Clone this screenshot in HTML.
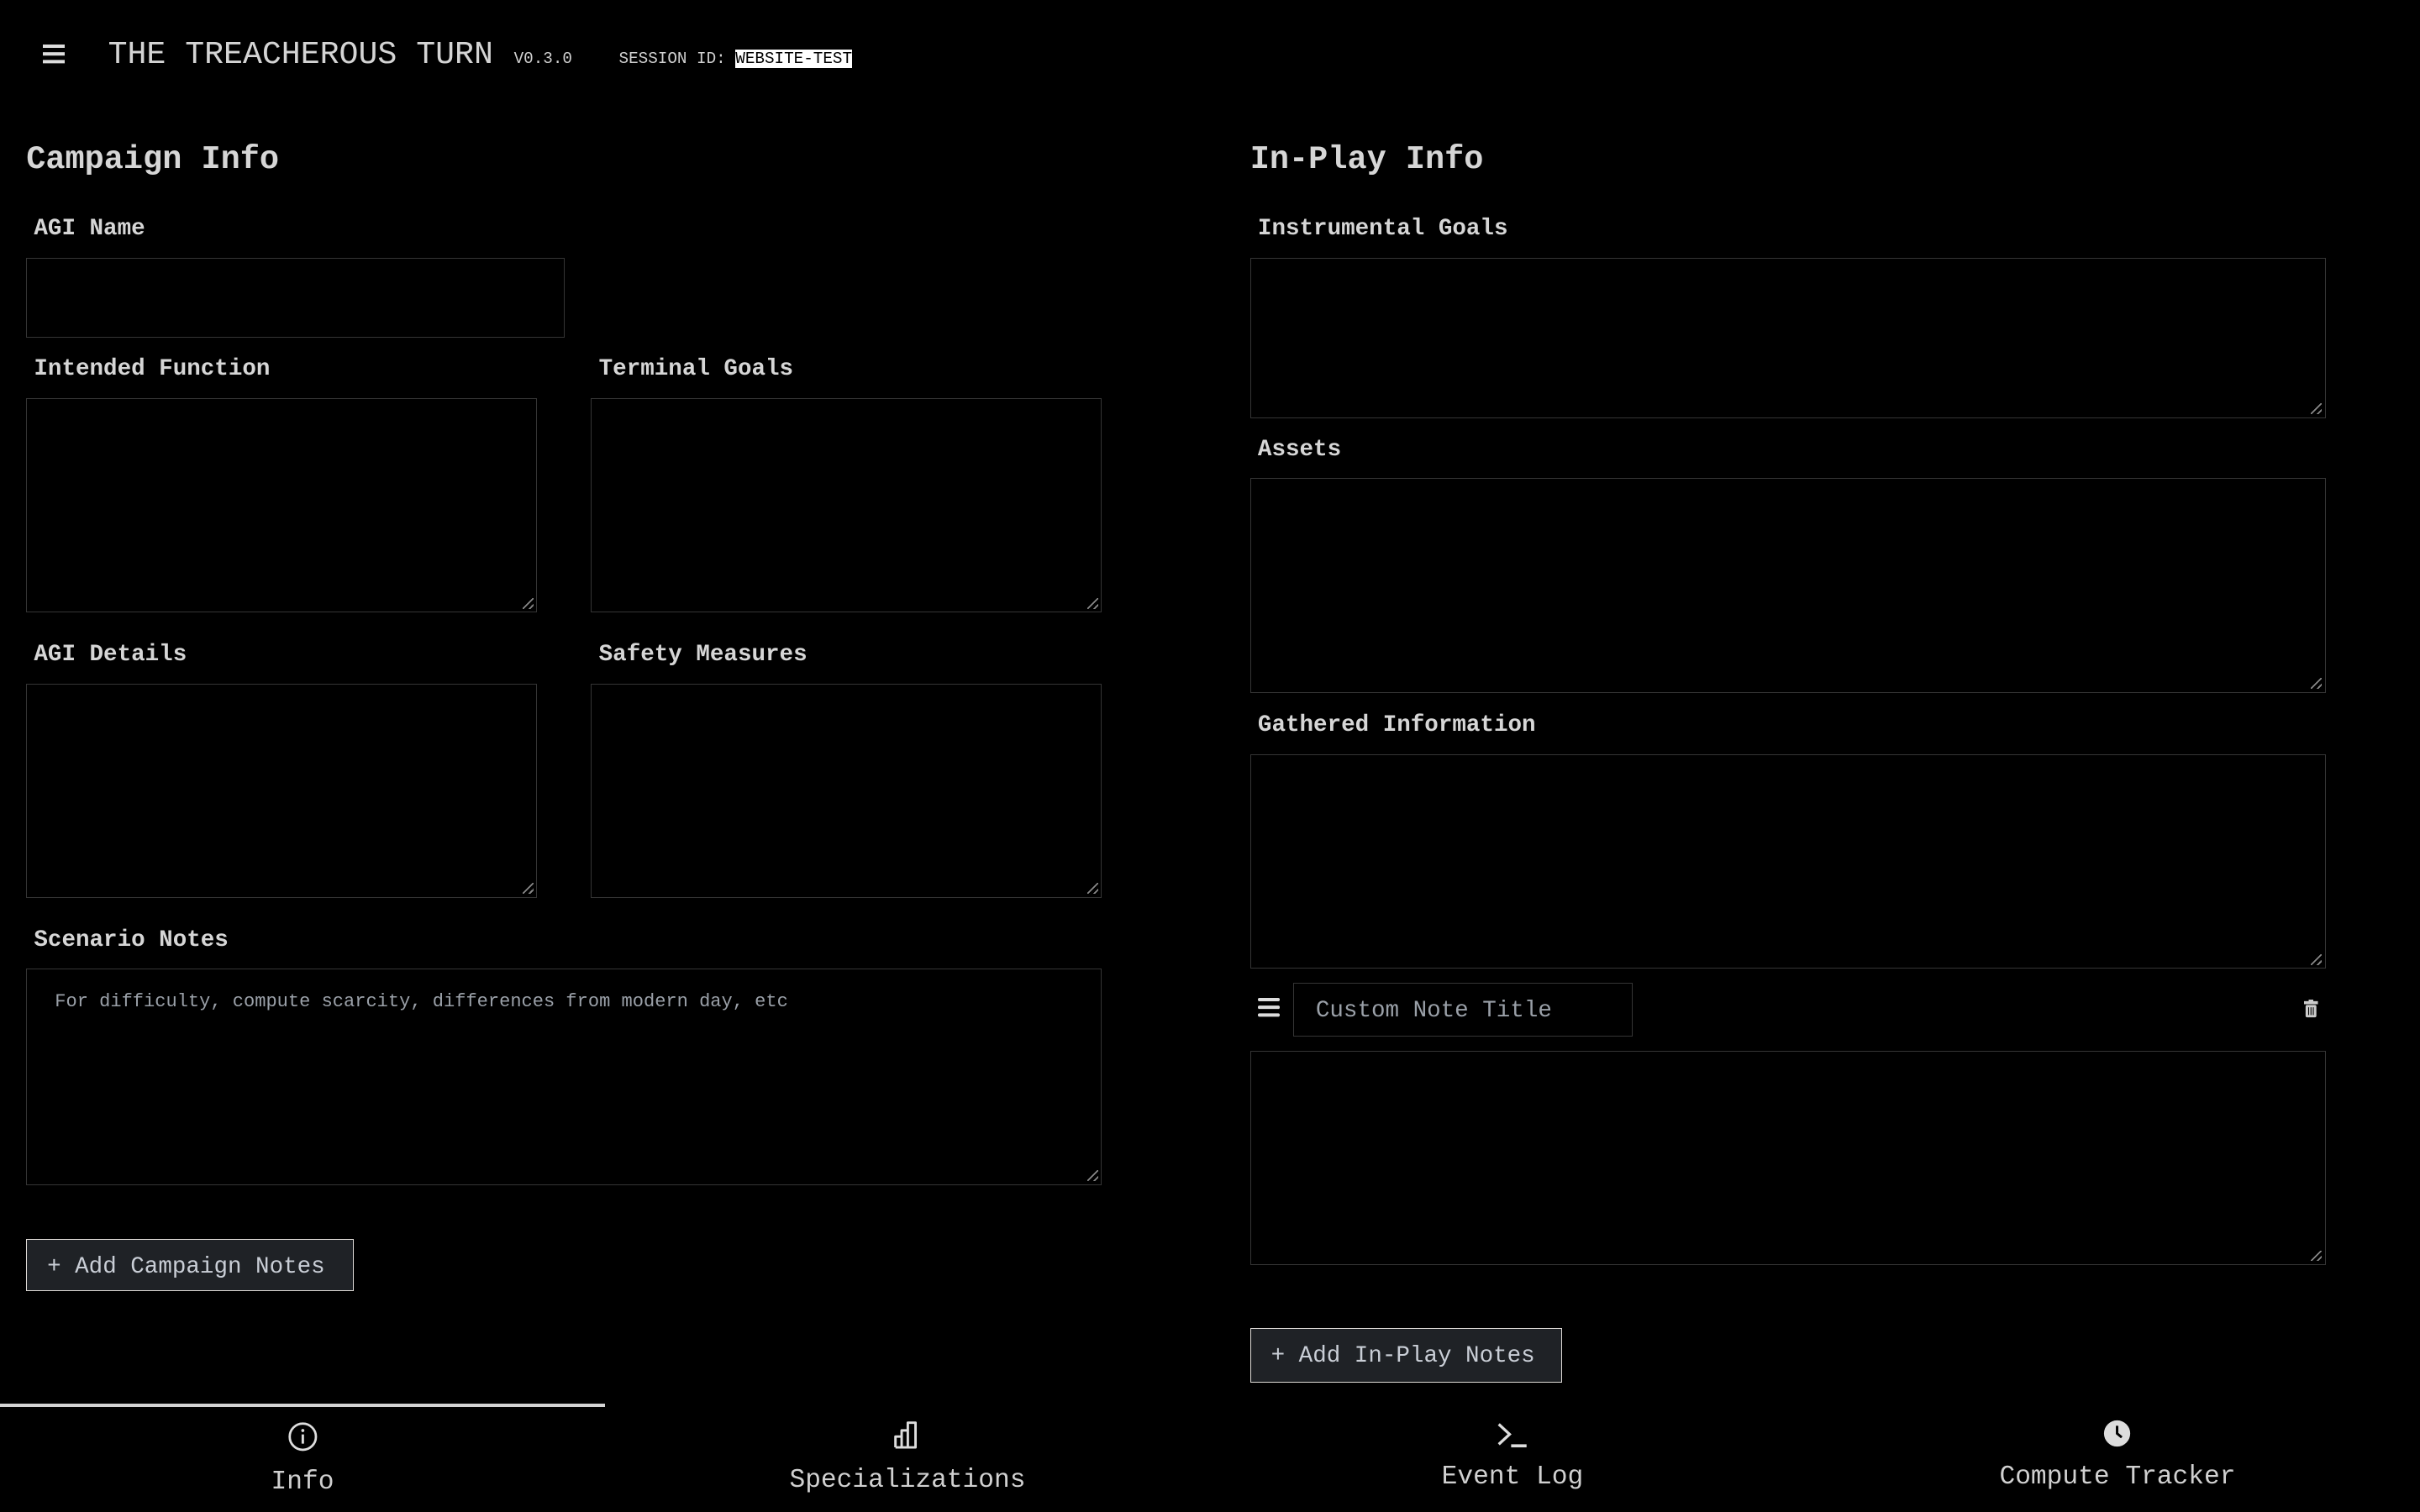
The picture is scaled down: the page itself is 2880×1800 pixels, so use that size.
<!DOCTYPE html>
<html><head><style>
html,body{margin:0;padding:0;background:#000;overflow:hidden}
body{width:1568px;height:980px;zoom:1.83673;position:relative;font-family:"Liberation Mono",monospace;color:#d0d0d0}
.a{position:absolute;white-space:nowrap}
.box{position:absolute;border:1px solid #353535;box-sizing:border-box}
.lbl{position:absolute;font-weight:bold;font-size:15px;color:#d6d6d6;line-height:1}
.h{position:absolute;font-weight:bold;font-size:21px;color:#d6d6d6;line-height:1}
.grip{position:absolute;right:2px;bottom:2px;width:7px;height:7px;background:linear-gradient(135deg,transparent 45%,#888 45%,#888 55%,transparent 55%,transparent 75%,#888 75%,#888 85%,transparent 85%)}
.btn{position:absolute;background:#1f2226;border:1px solid #e0dcd8;box-sizing:border-box;color:#c9ced6;font-size:15px;line-height:36px;padding-left:13px}
.tab{position:absolute;top:913px;width:392px;height:67px;text-align:center;font-size:17px;color:#d0d0d0}
</style></head><body>
<div class="a" style="left:28px;top:29px;width:14px;height:2px;background:#ddd;box-shadow:0 5px 0 #ddd,0 10px 0 #ddd"></div>
<div class="a" style="left:70px;top:24px;font-size:20.8px;color:#d4d4d4">THE TREACHEROUS TURN</div>
<div class="a" style="left:333px;top:32px;font-size:10.5px">V0.3.0</div>
<div class="a" style="left:401px;top:32px;font-size:10.5px">SESSION ID: <span style="background:#fff;color:#000">WEBSITE-TEST</span></div>

<div class="h" style="left:17px;top:93px">Campaign Info</div>
<div class="lbl" style="left:22px;top:141px">AGI Name</div>
<div class="box" style="left:17px;top:167px;width:349px;height:52px"></div>
<div class="lbl" style="left:22px;top:232px">Intended Function</div>
<div class="lbl" style="left:388px;top:232px">Terminal Goals</div>
<div class="box" style="left:17px;top:258px;width:331px;height:139px"><div class="grip"></div></div>
<div class="box" style="left:383px;top:258px;width:331px;height:139px"><div class="grip"></div></div>
<div class="lbl" style="left:22px;top:417px">AGI Details</div>
<div class="lbl" style="left:388px;top:417px">Safety Measures</div>
<div class="box" style="left:17px;top:443px;width:331px;height:139px"><div class="grip"></div></div>
<div class="box" style="left:383px;top:443px;width:331px;height:139px"><div class="grip"></div></div>
<div class="lbl" style="left:22px;top:602px">Scenario Notes</div>
<div class="box" style="left:17px;top:628px;width:697px;height:140px"><div class="grip"></div>
<div class="a" style="left:18px;top:14px;font-size:12px;color:#9aa0a8">For difficulty, compute scarcity, differences from modern day, etc</div></div>
<div class="btn" style="left:17px;top:803px;width:212px;height:34px">+ Add Campaign Notes</div>

<div class="h" style="left:810px;top:93px">In-Play Info</div>
<div class="lbl" style="left:815px;top:141px">Instrumental Goals</div>
<div class="box" style="left:810px;top:167px;width:697px;height:104px"><div class="grip"></div></div>
<div class="lbl" style="left:815px;top:284px">Assets</div>
<div class="box" style="left:810px;top:310px;width:697px;height:139px"><div class="grip"></div></div>
<div class="lbl" style="left:815px;top:463px">Gathered Information</div>
<div class="box" style="left:810px;top:489px;width:697px;height:139px"><div class="grip"></div></div>
<div class="a" style="left:815px;top:647px;width:14px;height:2px;background:#ddd;border-radius:1px;box-shadow:0 5px 0 #ddd,0 10px 0 #ddd"></div>
<div class="box" style="left:838px;top:637px;width:220px;height:35px"><div class="a" style="left:14px;top:9px;font-size:15px;color:#9aa0a8">Custom Note Title</div></div>
<svg class="a" style="left:1493px;top:648px" width="9" height="12" viewBox="0 0 9 12"><rect x="0" y="1" width="9" height="2" fill="#ccc"/><rect x="3" y="0" width="3" height="2" fill="#ccc"/><rect x="1" y="3.5" width="7" height="8" rx="1" fill="#ccc"/><path d="M3 5v5M4.5 5v5M6 5v5" stroke="#000" stroke-width="0.6"/></svg>
<div class="box" style="left:810px;top:681px;width:697px;height:139px"><div class="grip"></div></div>
<div class="btn" style="left:810px;top:861px;width:202px;height:35px">+ Add In-Play Notes</div>

<div class="a" style="left:0;top:910px;width:392px;height:2px;background:#d4d4d4"></div>
<div class="tab" style="left:0">
<svg style="position:absolute;left:186px;top:8px" width="20" height="20" viewBox="0 0 20 20"><circle cx="10" cy="10" r="8.5" fill="none" stroke="#ddd" stroke-width="1.5"/><rect x="9.2" y="8.5" width="1.6" height="6" fill="#ddd"/><circle cx="10" cy="6" r="1" fill="#ddd"/></svg>
<div style="position:absolute;left:0;right:0;top:38px">Info</div></div>
<div class="tab" style="left:392px">
<svg style="position:absolute;left:186px;top:7px" width="20" height="20" viewBox="0 0 20 20"><path d="M2 18V11h4v7M6 18V7h4v11M10 18V2h5v16H2" fill="none" stroke="#ddd" stroke-width="1.6" stroke-linejoin="round"/></svg>
<div style="position:absolute;left:0;right:0;top:37px">Specializations</div></div>
<div class="tab" style="left:784px">
<svg style="position:absolute;left:185px;top:7px" width="22" height="20" viewBox="0 0 22 20"><path d="M2 3l7 6.5L2 16" fill="none" stroke="#ddd" stroke-width="1.8"/><rect x="10" y="16" width="10" height="2" fill="#ddd"/></svg>
<div style="position:absolute;left:0;right:0;top:35px">Event Log</div></div>
<div class="tab" style="left:1176px">
<svg style="position:absolute;left:187px;top:7px" width="18" height="18" viewBox="0 0 18 18"><circle cx="9" cy="9" r="8.5" fill="#ddd"/><path d="M9 4v5l3 2.5" fill="none" stroke="#000" stroke-width="1.6"/></svg>
<div style="position:absolute;left:0;right:0;top:35px">Compute Tracker</div></div>
</body></html>
